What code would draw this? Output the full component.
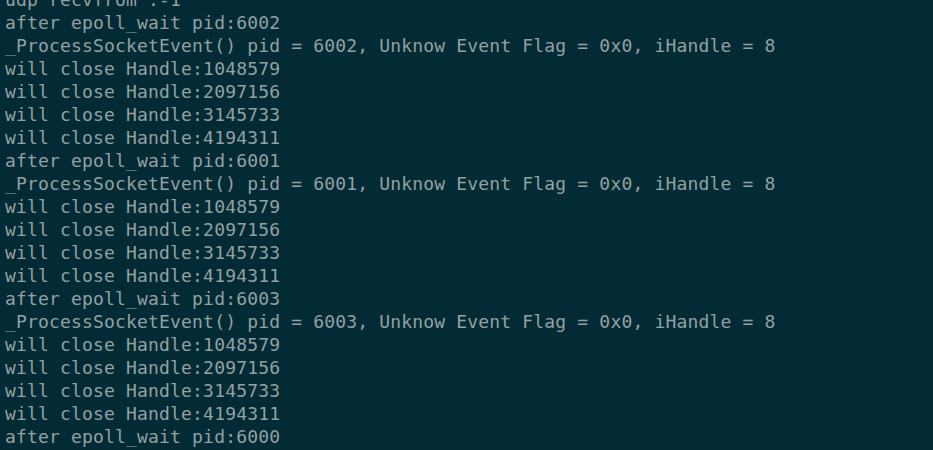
const lines: string[] = [
  "udp recvfrom :-1",
  "after epoll_wait pid:6002",
  "_ProcessSocketEvent() pid = 6002, Unknow Event Flag = 0x0, iHandle = 8",
  "will close Handle:1048579",
  "will close Handle:2097156",
  "will close Handle:3145733",
  "will close Handle:4194311",
  "after epoll_wait pid:6001",
  "_ProcessSocketEvent() pid = 6001, Unknow Event Flag = 0x0, iHandle = 8",
  "will close Handle:1048579",
  "will close Handle:2097156",
  "will close Handle:3145733",
  "will close Handle:4194311",
  "after epoll_wait pid:6003",
  "_ProcessSocketEvent() pid = 6003, Unknow Event Flag = 0x0, iHandle = 8",
  "will close Handle:1048579",
  "will close Handle:2097156",
  "will close Handle:3145733",
  "will close Handle:4194311",
  "after epoll_wait pid:6000",
];

export default function App() {
  return (
    <div className="w-[933px] h-[450px] overflow-hidden bg-[#032b36]">
      {/* terminal output, scrolled so the first line is cut off */}
      <div className="-mt-[12px] px-[5px] font-['DejaVu_Sans_Mono',monospace] text-[18px] tracking-[0.17px] leading-[23px] text-[#93a1a1] whitespace-pre">
        {lines.map((line, i) => (
          <div key={i}>{line}</div>
        ))}
      </div>
    </div>
  );
}
